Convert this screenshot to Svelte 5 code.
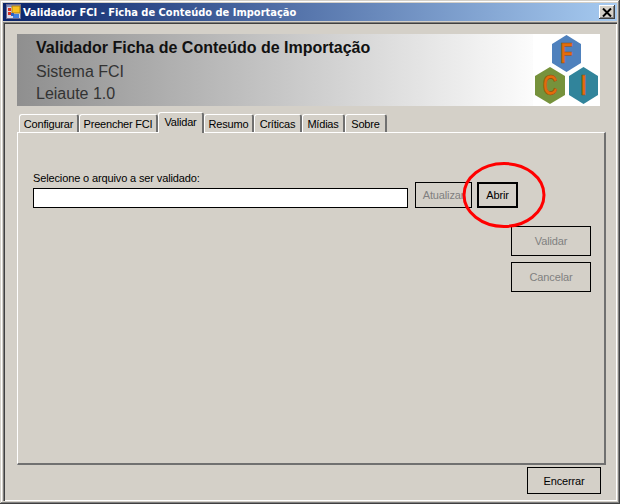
<script>
	const tabs = ["Configurar", "Preencher FCI", "Validar", "Resumo", "Críticas", "Mídias", "Sobre"];
	const tabWidths = [60, 79, 46, 50, 48, 43, 42];
	const active = "Validar";
</script>

<div class="window">
	<div class="titlebar">
		<svg class="appicon" width="16" height="16" viewBox="0 0 16 16">
			<rect x="0.5" y="0.5" width="14" height="14" fill="#d8d8e8" stroke="#6a6a90" />
			<rect x="1" y="1" width="13" height="2" fill="#7f8fc0" />
			<rect x="6" y="2" width="8" height="7" fill="#f8c020" stroke="#b08010" />
			<rect x="2" y="4" width="3" height="3" fill="#d83020" />
			<rect x="2" y="8" width="3" height="3" fill="#d83020" />
			<rect x="7" y="10" width="6" height="4" fill="#4080e0" />
			<rect x="5" y="9" width="3" height="3" fill="#3060c0" />
		</svg>
		<span class="title">Validador FCI - Ficha de Conteúdo de Importação</span>
		<button class="close" aria-label="Fechar">
			<svg width="10" height="9" viewBox="0 0 10 9">
				<path d="M1 0.5L9 8.5M9 0.5L1 8.5" stroke="#000" stroke-width="2" fill="none" />
			</svg>
		</button>
	</div>

	<div class="client">
		<div class="banner">
			<div class="banner-text">
				<h1>Validador Ficha de Conteúdo de Importação</h1>
				<p>Sistema FCI</p>
				<p>Leiaute 1.0</p>
			</div>
			<svg class="logo" width="67" height="72" viewBox="0 0 67 72">
				<polygon points="33.5,1 48,10 48,29 33.5,38 19,29 19,10" fill="#4f81bd" />
				<polygon points="17,33 32,42 32,61 17,70 2,61 2,42" fill="#76923c" />
				<polygon points="50.5,33 65,42 65,61 50.5,70 36,61 36,42" fill="#31849b" />
				<g class="letters">
					<text transform="translate(33.5 29) scale(.68 1)">F</text>
					<text transform="translate(17 61) scale(.68 1)">C</text>
					<text transform="translate(50.5 61) scale(.68 1)">I</text>
				</g>
			</svg>
		</div>

		<div class="tabstrip">
			{#each tabs as tab, i}
				<div class="tab" class:active={tab === active} style="width: {tabWidths[i]}px">{tab}</div>
			{/each}
		</div>

		<div class="panel">
			<div class="file-row">
				<div class="file-field">
					<label for="arquivo">Selecione o arquivo a ser validado:</label>
					<input id="arquivo" type="text" />
				</div>
				<button class="btn update" disabled>Atualizar</button>
				<button class="btn open">Abrir</button>
			</div>
			<div class="actions">
				<button class="btn action" disabled>Validar</button>
				<button class="btn action" disabled>Cancelar</button>
			</div>
		</div>

		<div class="footer">
			<button class="btn quit">Encerrar</button>
		</div>
	</div>

	<svg class="callout" width="86" height="70" viewBox="0 0 86 70">
		<ellipse cx="43" cy="35" rx="40" ry="31.5" fill="none" stroke="#ff0000" stroke-width="3" />
	</svg>
</div>

<style>
	:global(body) {
		background: #d4d0c8;
	}
	.window {
		position: relative;
		box-sizing: border-box;
		width: 620px;
		height: 504px;
		padding: 3px;
		display: flex;
		flex-direction: column;
		background: #d4d0c8;
		font-family: "Liberation Sans", Arial, sans-serif;
		font-size: 11px;
		color: #000;
		box-shadow:
			inset -1px -1px 0 #404040,
			inset 1px 1px 0 #d4d0c8,
			inset -2px -2px 0 #808080,
			inset 2px 2px 0 #ffffff;
	}
	.titlebar {
		height: 18px;
		flex: none;
		display: flex;
		align-items: center;
		padding: 0 2px 0 3px;
		background: linear-gradient(to right, #0a246a, #a6caf0);
		color: #fff;
	}
	.appicon {
		flex: none;
	}
	.title {
		margin-left: 1px;
		font-family: "DejaVu Sans Condensed", "DejaVu Sans", sans-serif;
		font-size: 11px;
		font-weight: bold;
		white-space: nowrap;
	}
	.close {
		margin-left: auto;
		width: 16px;
		height: 14px;
		padding: 0;
		border: 0;
		display: flex;
		align-items: center;
		justify-content: center;
		background: #d4d0c8;
		box-shadow:
			inset -1px -1px 0 #404040,
			inset 1px 1px 0 #ffffff,
			inset -2px -2px 0 #808080;
	}
	.client {
		flex: 1;
		margin-top: 1px;
		padding: 12px 17px 7px 14px;
		display: flex;
		flex-direction: column;
		box-sizing: border-box;
		min-height: 0;
		box-shadow:
			inset 1px 1px 0 #808080,
			inset 2px 2px 0 #404040,
			inset -1px -1px 0 #ffffff;
	}
	.banner {
		height: 72px;
		flex: none;
		display: flex;
		justify-content: space-between;
		background: linear-gradient(to right, #8f8f8f, #ffffff 530px, #ffffff);
	}
	.banner-text {
		padding: 5px 0 0 19px;
		color: #333;
	}
	h1 {
		margin: 0;
		font-size: 16px;
		line-height: 18px;
		font-weight: bold;
		color: #111;
	}
	.banner-text p {
		margin: 6px 0 0;
		font-size: 16px;
		line-height: 18px;
		height: 18px;
	}
	.banner-text p + p {
		margin-top: 4px;
	}
	.logo {
		flex: none;
		background: #fff;
	}
	.letters text {
		font-family: "Liberation Sans", Arial, sans-serif;
		font-size: 30px;
		font-weight: bold;
		text-anchor: middle;
		fill: #e36c0a;
		stroke: #8a4a10;
		stroke-width: 0.6px;
	}
	.tabstrip {
		flex: none;
		height: 20px;
		margin-top: 6px;
		padding-left: 2px;
		display: flex;
		align-items: flex-end;
		position: relative;
		z-index: 1;
	}
	.tab {
		box-sizing: border-box;
		height: 18px;
		display: flex;
		align-items: center;
		justify-content: center;
		border-top: 1px solid #fff;
		border-left: 1px solid #fff;
		border-right: 2px solid #707070;
		border-radius: 3px 3px 0 0;
		white-space: nowrap;
		background: #d4d0c8;
		letter-spacing: -0.2px;
	}
	.tab.active {
		height: 21px;
		margin-bottom: -1px;
		padding-bottom: 3px;
	}
	.panel {
		flex: 1;
		min-height: 0;
		margin-right: -6px;
		padding: 39px 13px 0 15px;
		display: flex;
		flex-direction: column;
		border-top: 1px solid #fff;
		border-left: 1px solid #fff;
		border-right: 2px solid #707070;
		border-bottom: 2px solid #707070;
	}
	.file-row {
		display: flex;
		align-items: flex-end;
	}
	.file-field {
		display: flex;
		flex-direction: column;
		width: 375px;
	}
	label {
		line-height: 13px;
		margin-bottom: 3px;
		letter-spacing: -0.13px;
	}
	input {
		box-sizing: border-box;
		width: 100%;
		height: 20px;
		margin: 0;
		padding: 0 2px;
		border: 1px solid #000;
		border-radius: 0;
		background: #fff;
		outline: 0;
	}
	.btn {
		box-sizing: border-box;
		padding: 0;
		border: 1px solid #000;
		border-radius: 0;
		background: #d4d0c8;
		color: #000;
		font-family: "Liberation Sans", Arial, sans-serif;
		font-size: 11px;
		letter-spacing: -0.15px;
	}
	.btn:disabled {
		color: #808080;
	}
	.update {
		width: 57px;
		height: 26px;
		margin-left: 7px;
	}
	.open {
		width: 41px;
		height: 26px;
		margin-left: 5px;
		border-width: 2px;
	}
	.actions {
		margin-top: 18px;
		display: flex;
		flex-direction: column;
		align-items: flex-end;
		gap: 6px;
	}
	.action {
		width: 80px;
		height: 30px;
	}
	.footer {
		flex: none;
		margin-top: 2px;
		display: flex;
		justify-content: flex-end;
	}
	.quit {
		width: 74px;
		height: 27px;
		margin-right: -1px;
	}
	/* marcação vermelha por cima da captura */
	.callout {
		position: absolute;
		left: 461px;
		top: 160px;
		pointer-events: none;
	}
</style>
